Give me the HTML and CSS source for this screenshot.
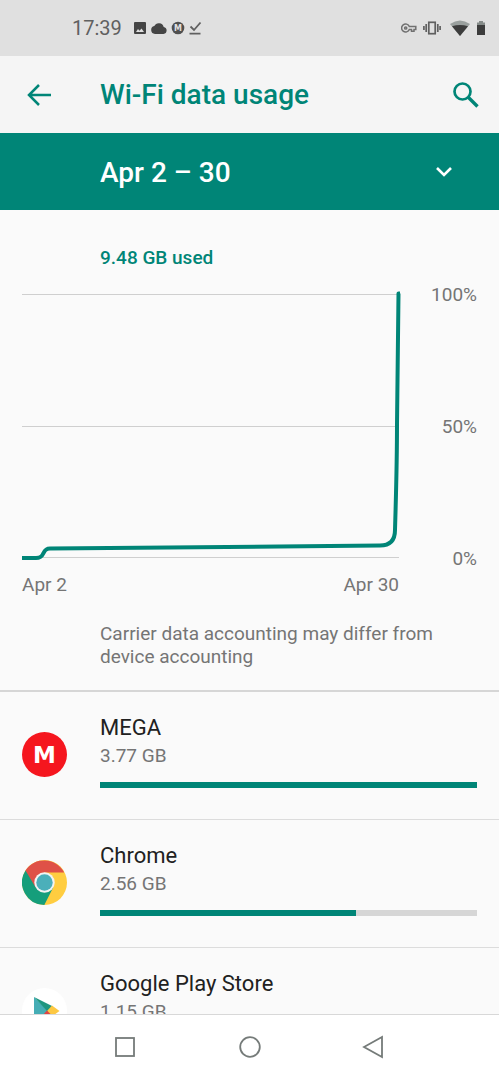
FILE: index.html
```html
<!DOCTYPE html>
<html lang="en">
<head>
<meta charset="utf-8">
<meta name="viewport" content="width=device-width, initial-scale=1">
<title>Wi-Fi data usage</title>
<link rel="stylesheet" href="styles.css">
</head>
<body>
<div class="screen">
  <div class="status">
    <span class="clock">17:39</span>
    <div class="status-left">
      <svg width="14" height="14" viewBox="0 0 14 14"><path fill="#454545" fill-rule="evenodd" d="M2 1h10a1 1 0 0 1 1 1v10a1 1 0 0 1-1 1H2a1 1 0 0 1-1-1V2a1 1 0 0 1 1-1zM3 11h8L8.500 7.500 6.500 9.800 5 8z"/></svg>
      <svg width="18" height="14" viewBox="0 0 18 14"><path fill="#454545" d="M5 13a4 4 0 0 1-.7-7.900 5 5 0 0 1 9.400 0.800A3.600 3.600 0 0 1 13.500 13z"/></svg>
      <svg width="14" height="14" viewBox="0 0 14 14"><circle cx="7" cy="7" r="6.300" fill="#505050"/><text class="mini-mark" x="7" y="10">M</text></svg>
      <svg width="14" height="14" viewBox="0 0 14 14"><path fill="none" stroke="#606060" stroke-width="1.800" d="M2.500 5.500 6 9 12.500 1.500M1.500 12.700h11"/></svg>
    </div>
    <div class="status-right">
      <svg width="16" height="14" viewBox="0 0 16 14"><g fill="none" stroke="#707070" stroke-width="1.500"><path d="M8.300 5.500A4 4 0 1 0 8.300 8.500H10.500V10.300H13V8.500H14.800V5.500z"/><circle cx="4.700" cy="7" r="1.100"/></g></svg>
      <svg width="18" height="14" viewBox="0 0 18 14"><g fill="none" stroke="#606060" stroke-width="1.700"><rect x="5.800" y="1.300" width="6.400" height="11.400"/><path d="M3.200 3v8M14.800 3v8M.9 5v4M17.100 5v4"/></g></svg>
      <svg class="wifi" width="20" height="16" viewBox="0 0 20 16"><path fill="#9aa09e" d="M0 4Q10-3 20 4L10 16z"/><path fill="#3c3c3c" d="M2 6.300Q10 3.500 18 6.300L10 16z"/></svg>
      <svg width="10" height="14" viewBox="0 0 10 14"><path fill="#858b89" d="M3 0h4v1.500h2V5H1V1.500h2z"/><path fill="#3c3c3c" d="M1 4h8v10H1z"/></svg>
    </div>
  </div>

  <header class="appbar">
    <button class="icon-button" aria-label="Back"><svg width="26" height="24" viewBox="0 0 26 24"><path fill="none" stroke="#008577" stroke-width="2.500" d="M25 12H3M13 2 3 12l10 10"/></svg></button>
    <h1>Wi-Fi data usage</h1>
    <button class="icon-button search" aria-label="Search"><svg width="26" height="26" viewBox="0 0 26 26"><g fill="none" stroke="#008577"><circle cx="9.500" cy="9.500" r="8" stroke-width="2.700"/><path stroke-width="3.400" d="M15 15l9.500 9.500"/></g></svg></button>
  </header>

  <div class="period">
    <select aria-label="Billing period"><option>Apr 2 – 30</option></select>
    <svg class="chevron" width="18" height="12" viewBox="0 0 18 12"><path fill="none" stroke="#fff" stroke-width="2.600" d="M2 2l7 7 7-7"/></svg>
  </div>

  <main>
    <section class="usage">
      <p class="total">9.48 GB used</p>
      <div class="chart">
        <svg class="plot" viewBox="0 0 377 286" preserveAspectRatio="none" role="img" aria-label="Data used from Apr 2 to Apr 30">
          <path class="gridline" d="M0 10.500H377M0 142.500H377M0 273.500H377"/>
          <path class="series" d="M0 274H14C24 274 19 264.500 28 264.500L358 261.500Q373 261.500 373 246Q375 180 375 140L376.500 9.500H378"/>
        </svg>
        <div class="scale"><span>100%</span><span>50%</span><span>0%</span></div>
        <div class="dates"><span>Apr 2</span><span>Apr 30</span></div>
      </div>
      <p class="note">Carrier data accounting may differ from device accounting</p>
    </section>

    <ul class="apps">
      <li>
        <svg class="logo" viewBox="0 0 45 45"><circle cx="22.500" cy="22.500" r="22.500" fill="#f5161e"/><text class="mega-mark" x="22.500" y="31">M</text></svg>
        <div class="app">
          <h2 id="mega">MEGA</h2><p>3.77 GB</p>
          <progress aria-labelledby="mega" max="100" value="100"></progress>
        </div>
      </li>
      <li>
        <svg class="logo" viewBox="0 0 45 45">
          <circle cx="22.500" cy="22.500" r="22.500" fill="#ffcd40"/>
          <path fill="#159e7b" d="M3.500 10.500A22.500 22.500 0 0 0 22.300 45L31.200 27.500 22.500 22.500z"/>
          <path fill="#df5147" d="M3.500 10.500A22.500 22.500 0 0 1 42.200 12.400H22.500L13.700 27.500z"/>
          <circle cx="22.500" cy="22.500" r="10.200" fill="#f3f3f3"/><circle cx="22.500" cy="22.500" r="8.200" fill="#4bafba"/>
        </svg>
        <div class="app">
          <h2 id="chrome">Chrome</h2><p>2.56 GB</p>
          <progress aria-labelledby="chrome" max="100" value="68"></progress>
        </div>
      </li>
      <li>
        <svg class="logo" viewBox="0 0 45 45">
          <circle cx="22.500" cy="22.500" r="22.500" fill="#fff"/>
          <path fill="#45adb5" d="M12 9v28l14-14z"/><path fill="#1f9680" d="M12 9l19 9.500-5 5.500z"/><path fill="#fdc843" d="M30 17.500l7.500 5.500-7.500 5.500-5-5.500z"/><path fill="#df4444" d="M25 22.500l6 6L12 37z"/>
        </svg>
        <div class="app">
          <h2 id="play">Google Play Store</h2><p>1.15 GB</p>
          <progress aria-labelledby="play" max="100" value="30"></progress>
        </div>
      </li>
    </ul>
  </main>

  <nav class="navbar" aria-label="System">
    <button aria-label="Recent apps"><svg width="24" height="24" viewBox="0 0 24 24"><rect x="3" y="3" width="18" height="18"/></svg></button>
    <button aria-label="Home"><svg width="24" height="24" viewBox="0 0 24 24"><circle cx="12" cy="12" r="9.800"/></svg></button>
    <button aria-label="Back"><svg width="24" height="24" viewBox="0 0 24 24"><path d="M2 12 20 2v20z"/></svg></button>
  </nav>
</div>
</body>
</html>
```
FILE: styles.css
```css
* { box-sizing: border-box; margin: 0; padding: 0; }
body { font-family: Roboto, sans-serif; color: #212121; background: #fafafa; }
button { border: 0; background: none; display: flex; align-items: center; justify-content: center; }
svg { display: block; flex: none; }

.screen { height: 100vh; display: flex; flex-direction: column; overflow: hidden; }

.status { flex: none; height: 56px; padding: 0 13px 0 72px; background: #e0e0e0; display: flex; align-items: center; }
.clock { font-size: 20px; line-height: 24px; color: #606060; }
.status-left { display: flex; align-items: center; gap: 3px; margin-left: 11px; }
.status-right { display: flex; align-items: center; gap: 6px; margin-left: auto; }
.wifi { margin-left: 3px; }
.mini-mark { font: 700 8px "DejaVu Sans", sans-serif; fill: #e0e0e0; text-anchor: middle; }

.appbar { flex: none; height: 77px; padding: 0 20px 0 26px; background: #f5f5f5; display: flex; align-items: center; }
.icon-button { width: 26px; height: 48px; }
.appbar h1 { flex: 1; margin-left: 48px; font-size: 28px; line-height: 32px; font-weight: 500; color: #008577; }

.period { flex: none; display: grid; align-items: center; background: #008577; }
.period select { grid-area: 1 / 1; width: 100%; height: 77px; padding: 2px 80px 0 100px; border: 0; appearance: none; background: transparent; color: #fff; font: 500 28px Roboto, sans-serif; }
.chevron { grid-area: 1 / 1; justify-self: end; margin-right: 46px; pointer-events: none; }

main { flex: 1; min-height: 0; overflow: hidden; }
.usage { padding: 37px 22px 22px; border-bottom: 2px solid #d6d6d6; }
.total { margin-left: 78px; font-size: 19px; line-height: 22px; font-weight: 500; color: #008577; }
.chart { display: grid; grid-template-columns: 1fr 78px; row-gap: 4px; margin-top: 15px; font-size: 19px; line-height: 22px; color: #757575; }
.plot { width: 100%; height: 286px; overflow: visible; }
.gridline { fill: none; stroke: #cfcfcf; stroke-width: 1; }
.series { fill: none; stroke: #008577; stroke-width: 4; stroke-linejoin: round; }
.scale { display: flex; flex-direction: column; justify-content: space-between; text-align: right; }
.dates { display: flex; justify-content: space-between; }
.note { margin: 26px 0 0 78px; font-size: 19px; line-height: 23px; color: #757575; }

.apps { list-style: none; }
.apps li { display: flex; align-items: center; gap: 33px; height: 128px; padding: 0 22px; border-bottom: 1px solid #dcdcdc; }
.logo { width: 45px; height: 45px; margin-bottom: 3px; }
.mega-mark { font: 700 23px "DejaVu Sans", sans-serif; fill: #fff; text-anchor: middle; }
.app { flex: 1; padding-bottom: 9px; }
.app h2 { font-size: 22px; line-height: 28px; font-weight: 400; }
.app p { font-size: 19px; line-height: 28px; color: #757575; }
.app progress { display: block; width: 100%; height: 6px; margin-top: 12px; border: 0; appearance: none; background: #d6d6d6; }
.app progress::-webkit-progress-bar { background: #d6d6d6; }
.app progress::-webkit-progress-value { background: #008577; }

.navbar { flex: none; height: 66px; padding: 0 12.5% 2px; display: flex; background: #fff; border-top: 1px solid #d8d8d8; }
.navbar button { flex: 1; }
.navbar svg { fill: none; stroke: #757b79; stroke-width: 1.8; }
```
